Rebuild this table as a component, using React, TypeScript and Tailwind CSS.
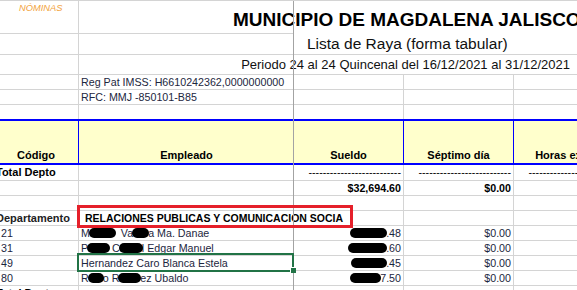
import type { ReactNode } from "react";

type Part = string | number;

interface Employee {
  code: string;
  name: Part[];
  pay: Part[];
  selected?: boolean;
}

// numbers are blacked-out spans (width in px)
const EMPLOYEES: Employee[] = [
  { code: "21", name: ["M", 27, "  Va", 17, "a Ma. Danae"], pay: [37, ".48"] },
  { code: "31", name: ["P", 23, " C", 24, "l Edgar Manuel"], pay: [39, ".60"] },
  { code: "49", name: ["Hernandez Caro Blanca Estela"], pay: [36, ".45"], selected: true },
  { code: "80", name: ["R", 16, "o R", 23, "ez Ubaldo"], pay: [31, "7.50"] },
];

const COL = ["w-[85px]", "w-[215px]", "w-[110px]", "w-[110px]", "w-[110px]"];
const DASHES = "-".repeat(26);

function Redacted({ parts }: { parts: Part[] }) {
  return (
    <>
      {parts.map((p, i) =>
        typeof p === "number" ? (
          <span
            key={i}
            className="relative -mx-[1px] inline-block h-[10px] rounded-full bg-black"
            style={{ width: p }}
          />
        ) : (
          <span key={i}>{p}</span>
        )
      )}
    </>
  );
}

function Cell({ col, className = "", children }: { col: number; className?: string; children?: ReactNode }) {
  return (
    <div
      className={`${COL[col]} relative flex shrink-0 items-center whitespace-pre border-r border-b border-[#d4d4d4] ${className}`}
    >
      {children}
    </div>
  );
}

function Head({ col, label, edge = true }: { col: number; label: string; edge?: boolean }) {
  return (
    <div
      className={`${COL[col]} flex shrink-0 items-end justify-center pb-[2px] text-[11px] font-bold leading-none text-black ${
        edge ? "border-r border-[#0000ff]" : ""
      }`}
    >
      {label}
    </div>
  );
}

export default function App() {
  return (
    <div className="relative h-[290px] w-[577px] overflow-hidden border-t border-[#d4d4d4] bg-white font-['Liberation_Sans',Arial,sans-serif] text-[10.7px] leading-none text-[#1c2640]">
      <div className="-ml-[6px] w-[640px]">
        {/* title block */}
        <div className="flex h-[33px]">
          <Cell col={0} className="items-start pl-[25px] pt-[3px]">
            <span className="text-[9.3px] italic text-[#f2a23a]">NÓMINAS</span>
          </Cell>
          <div className="flex w-[545px] shrink-0 flex-col">
            <div className="flex flex-1 items-end whitespace-nowrap pb-[4px] pl-[154px] text-[19px] font-bold text-black">
              MUNICIPIO DE MAGDALENA JALISCO
            </div>
            <div className="h-px w-[215px] bg-[#d4d4d4]" />
          </div>
        </div>
        <div className="flex h-[21px]">
          <Cell col={0} />
          <div className="flex w-[545px] shrink-0 items-center whitespace-nowrap border-b border-[#d4d4d4] pl-[228px] text-[15.5px] text-[#111]">
            Lista de Raya (forma tabular)
          </div>
        </div>
        <div className="flex h-[20px]">
          <Cell col={0} />
          <div className="flex w-[545px] shrink-0 items-center justify-end whitespace-nowrap border-b border-[#d4d4d4] pr-[54px] text-[13px] text-[#111]">
            Periodo 24 al 24 Quincenal del 16/12/2021 al 31/12/2021
          </div>
        </div>
        <div className="flex h-[15px]">
          <Cell col={0} />
          <Cell col={1} className="pl-[2px]">Reg Pat IMSS: H6610242362,0000000000</Cell>
          <Cell col={2} />
          <Cell col={3} />
          <Cell col={4} />
        </div>
        <div className="flex h-[15px]">
          <Cell col={0} />
          <Cell col={1} className="pl-[2px]">RFC: MMJ -850101-B85</Cell>
          <Cell col={2} />
          <Cell col={3} />
          <Cell col={4} />
        </div>
        <div className="flex h-[14px]">
          {COL.map((c, i) => (
            <div key={i} className={`${c} shrink-0 border-r border-[#d4d4d4]`} />
          ))}
        </div>

        {/* column headers */}
        <div className="flex h-[46px] border-y-2 border-[#0000ff] bg-[#ffffcc]">
          <Head col={0} label="Código" />
          <Head col={1} label="Empleado" edge={false} />
          <Head col={2} label="Sueldo" />
          <Head col={3} label="Séptimo día" />
          <Head col={4} label="Horas extras" />
        </div>

        {/* department totals */}
        <div className="flex h-[16px] font-bold text-black">
          <Cell col={0} className="pl-[2px] text-[11px]">Total Depto</Cell>
          <Cell col={1} />
          <Cell col={2} className="justify-end overflow-hidden pr-[2px] font-normal">{DASHES}</Cell>
          <Cell col={3} className="justify-end overflow-hidden pr-[2px] font-normal">{DASHES}</Cell>
          <Cell col={4} className="justify-end overflow-hidden pr-[2px] font-normal">{DASHES}</Cell>
        </div>
        <div className="flex h-[15px] font-bold text-black">
          <Cell col={0} />
          <Cell col={1} />
          <Cell col={2} className="justify-end pr-[2px]">$32,694.60</Cell>
          <Cell col={3} className="justify-end pr-[2px]">$0.00</Cell>
          <Cell col={4} />
        </div>
        <div className="flex h-[15px]">
          <Cell col={0} />
          <Cell col={1} />
          <Cell col={2} />
          <Cell col={3} />
          <Cell col={4} />
        </div>

        {/* department */}
        <div className="flex h-[15px] font-bold text-black">
          <Cell col={0} className="overflow-hidden pl-[2px] text-[11px] text-[#222]">Departamento</Cell>
          <Cell col={1} className="pl-[6px] text-[10.5px]">
            RELACIONES PUBLICAS Y COMUNICACION SOCIA
            <div className="absolute -left-[2px] -top-[6px] z-10 h-[23px] w-[276px] border-[3px] border-[#e5202a]" />
          </Cell>
          <Cell col={2} />
          <Cell col={3} />
          <Cell col={4} />
        </div>

        {EMPLOYEES.map((e) => (
          <div key={e.code} className="flex h-[15px]">
            <Cell col={0} className="pl-[7px]">{e.code}</Cell>
            <Cell col={1} className="pl-[2px]">
              <Redacted parts={e.name} />
              {e.selected && (
                <div className="absolute -left-[2px] -top-[3px] z-10 h-[19px] w-[217px] border-2 border-[#217346]">
                  <div className="absolute -bottom-[3px] -right-[4px] size-[6px] border-l border-t border-white bg-[#217346]" />
                </div>
              )}
            </Cell>
            <Cell col={2} className="justify-end pr-[2px]">
              <Redacted parts={e.pay} />
            </Cell>
            <Cell col={3} className="justify-end pr-[2px]">$0.00</Cell>
            <Cell col={4} />
          </div>
        ))}

        <div className="flex h-[15px] font-bold text-black">
          <Cell col={0} className="pl-[2px] text-[11px]">Total Depto</Cell>
          <Cell col={1} />
          <Cell col={2} />
          <Cell col={3} />
          <Cell col={4} />
        </div>
      </div>

      {/* frozen pane divider */}
      <div className="absolute left-[293px] top-0 h-full w-px bg-[#a3a3a3]" />
    </div>
  );
}
